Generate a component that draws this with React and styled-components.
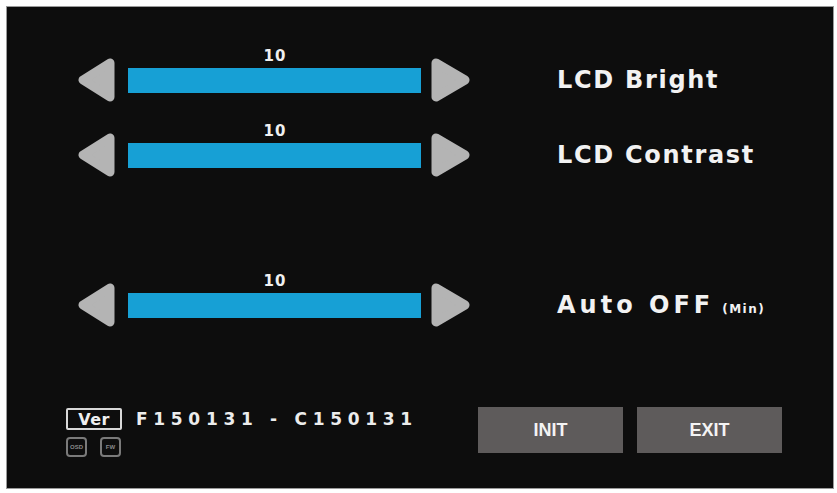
import React from "react";
import styled, { createGlobalStyle } from "styled-components";

const GlobalStyle = createGlobalStyle`
  html, body {
    margin: 0;
    padding: 0;
    background: #ffffff;
  }
  body {
    font-family: "Liberation Sans", Arial, sans-serif;
  }
`;

const Page = styled.div`
  width: 837px;
  height: 493px;
  padding: 7px 4px 5px 7px;
  box-sizing: border-box;
`;

const Screen = styled.div`
  width: 826px;
  height: 481px;
  box-sizing: border-box;
  background: #0d0d0d;
  box-shadow: 0 0 0 1px #9a9a9a;
  padding: 51px 51px 0 59px;
  display: flex;
  flex-direction: column;
  color: #f2f2f2;
`;

const Row = styled.div`
  display: flex;
  align-items: center;
  height: 44px;
  margin-top: ${(p) => p.$top || 0}px;
  margin-left: 12px;
`;

const Slider = styled.div`
  display: flex;
  align-items: flex-start;
  height: 44px;
`;

const ArrowBtn = styled.svg`
  display: block;
  flex: none;
`;

const TrackCol = styled.div`
  display: flex;
  flex-direction: column;
  align-items: center;
  gap: 4px;
  margin: -10px 10px 0 13px;
`;

const Value = styled.div`
  font-family: "DejaVu Sans", sans-serif;
  font-size: 15px;
  line-height: 16px;
  font-weight: bold;
  letter-spacing: 1px;
  padding-left: 1px;
  color: #f0f0f0;
`;

const Bar = styled.div`
  width: 293px;
  height: 25px;
  background: #17a0d5;
`;

const Label = styled.div`
  margin-left: 87px;
  font-family: "DejaVu Sans", sans-serif;
  font-size: 24px;
  font-weight: bold;
  letter-spacing: ${(p) => p.$spacing || 1.7}px;
  white-space: nowrap;
  display: flex;
  align-items: baseline;
  color: #f2f2f2;
`;

const Unit = styled.span`
  font-size: 12px;
  letter-spacing: 1.5px;
  margin-left: 8px;
`;

const Footer = styled.div`
  display: flex;
  justify-content: space-between;
  align-items: flex-start;
  margin-top: 80px;
`;

const Info = styled.div`
  display: flex;
  flex-direction: column;
  gap: 7px;
  padding-top: 1px;
`;

const VersionLine = styled.div`
  display: flex;
  align-items: center;
  gap: 14px;
`;

const VerBox = styled.div`
  width: 56px;
  height: 22px;
  box-sizing: border-box;
  border: 2px solid #d8d8d8;
  border-radius: 2px;
  display: flex;
  align-items: center;
  justify-content: center;
  font-family: "DejaVu Sans", sans-serif;
  font-size: 16px;
  font-weight: bold;
  letter-spacing: 0.5px;
  color: #f0f0f0;
`;

const Version = styled.div`
  font-family: "DejaVu Sans", sans-serif;
  font-size: 17px;
  font-weight: bold;
  letter-spacing: 5.7px;
  white-space: nowrap;
  color: #ececec;
`;

const Badges = styled.div`
  display: flex;
  gap: 13px;
`;

const Badge = styled.div`
  width: 21px;
  height: 20px;
  box-sizing: border-box;
  border: 2px solid #7a7a7a;
  border-radius: 4px;
  display: flex;
  align-items: center;
  justify-content: center;
  font-size: 6px;
  font-weight: bold;
  color: #8a8a8a;
`;

const Buttons = styled.div`
  display: flex;
  gap: 14px;
`;

const Button = styled.button`
  width: 145px;
  height: 46px;
  border: none;
  background: #5e5b5b;
  color: #f4f4f4;
  font-family: "Liberation Sans", Arial, sans-serif;
  font-size: 18px;
  font-weight: bold;
  padding: 0;
`;

const LeftArrow = () => (
  <ArrowBtn width="37" height="44" viewBox="0 0 37 44">
    <polygon
      points="5,22 32,5 32,39"
      fill="#b4b4b4"
      stroke="#b4b4b4"
      strokeWidth="9"
      strokeLinejoin="round"
    />
  </ArrowBtn>
);

const RightArrow = () => (
  <ArrowBtn width="39" height="44" viewBox="0 0 39 44">
    <polygon
      points="5,5 34,22 5,39"
      fill="#b4b4b4"
      stroke="#b4b4b4"
      strokeWidth="9"
      strokeLinejoin="round"
    />
  </ArrowBtn>
);

const SettingRow = ({ top, value, children }) => (
  <Row $top={top}>
    <Slider>
      <LeftArrow />
      <TrackCol>
        <Value>{value}</Value>
        <Bar />
      </TrackCol>
      <RightArrow />
    </Slider>
    {children}
  </Row>
);

const App = () => {
  return (
    <Page>
      <GlobalStyle />
      <Screen>
        <SettingRow top={0} value="10">
          <Label>LCD Bright</Label>
        </SettingRow>
        <SettingRow top={31} value="10">
          <Label>LCD Contrast</Label>
        </SettingRow>
        <SettingRow top={106} value="10">
          <Label $spacing={4}>
            Auto OFF<Unit>(Min)</Unit>
          </Label>
        </SettingRow>
        <Footer>
          <Info>
            <VersionLine>
              <VerBox>Ver</VerBox>
              <Version>F150131 - C150131</Version>
            </VersionLine>
            <Badges>
              <Badge>OSD</Badge>
              <Badge>FW</Badge>
            </Badges>
          </Info>
          <Buttons>
            <Button>INIT</Button>
            <Button>EXIT</Button>
          </Buttons>
        </Footer>
      </Screen>
    </Page>
  );
};

export default App;
